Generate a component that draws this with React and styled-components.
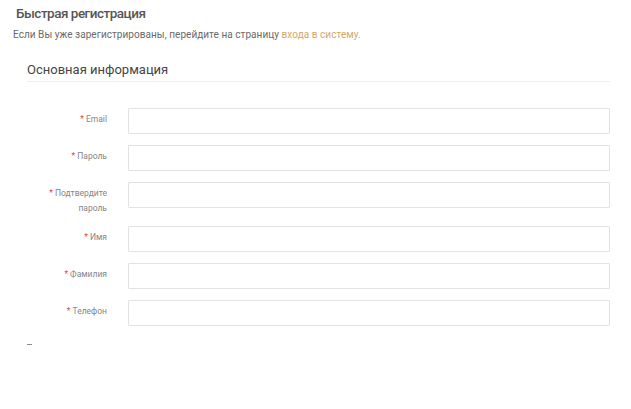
import React from "react";
import styled, { createGlobalStyle } from "styled-components";

const Global = createGlobalStyle`
  html, body { margin: 0; padding: 0; background: #fff; }
  body { font-family: Roboto, "Liberation Sans", Arial, sans-serif; }
  * { box-sizing: border-box; }
`;

const Page = styled.div`
  width: 631px;
  height: 409px;
  padding: 4px 21px 0 16px;
`;

const Title = styled.h1`
  margin: 0;
  font-size: 13.5px;
  line-height: 18px;
  font-weight: 500;
  letter-spacing: -0.5px;
  color: #555;
`;

const Intro = styled.p`
  margin: 7px 0 0 -3px;
  font-size: 10px;
  line-height: 12px;
  letter-spacing: 0.05px;
  color: #6a6a6a;
`;

const Link = styled.a`
  color: #d2a965;
  text-decoration: none;
`;

const Section = styled.section`
  margin: 21px 0 0 11px;
`;

const SectionTitle = styled.h2`
  margin: 0;
  padding-bottom: 3px;
  font-size: 13px;
  line-height: 16px;
  font-weight: 400;
  color: #444;
  border-bottom: 1px solid #eeeeee;
`;

const Form = styled.form`
  margin-top: 26px;
  display: flex;
  flex-direction: column;
  gap: 11px;
`;

const Row = styled.div`
  display: flex;
  align-items: flex-start;
`;

const Label = styled.label`
  width: 80px;
  padding-top: 4px;
  text-align: right;
  font-size: 8.5px;
  line-height: 14.5px;
  color: #868686;
`;

const Star = styled.span`
  color: #e8414b;
  margin-right: 2px;
`;

const Input = styled.input`
  margin-left: 21px;
  width: 482px;
  height: 26px;
  border: 1px solid #e2e2e2;
  border-radius: 1px;
  background: #fff;
  outline: none;
`;

const Dash = styled.div`
  margin-top: 18px;
  width: 5px;
  height: 1px;
  background: #8a8a8a;
`;

const fields = [
  { id: "email", label: "Email", type: "email" },
  { id: "password", label: "Пароль", type: "password" },
  { id: "confirm", label: "Подтвердите пароль", type: "password" },
  { id: "first", label: "Имя", type: "text" },
  { id: "last", label: "Фамилия", type: "text" },
  { id: "phone", label: "Телефон", type: "tel" },
];

export default function App() {
  return (
    <>
      <Global />
      <Page>
        <Title>Быстрая регистрация</Title>
        <Intro>
          Если Вы уже зарегистрированы, перейдите на страницу{" "}
          <Link href="#">входа в систему.</Link>
        </Intro>
        <Section>
          <SectionTitle>Основная информация</SectionTitle>
          <Form>
            {fields.map((f) => (
              <Row key={f.id}>
                <Label htmlFor={f.id}>
                  <Star>*</Star>
                  {f.label}
                </Label>
                <Input id={f.id} type={f.type} />
              </Row>
            ))}
          </Form>
          <Dash />
        </Section>
      </Page>
    </>
  );
}
